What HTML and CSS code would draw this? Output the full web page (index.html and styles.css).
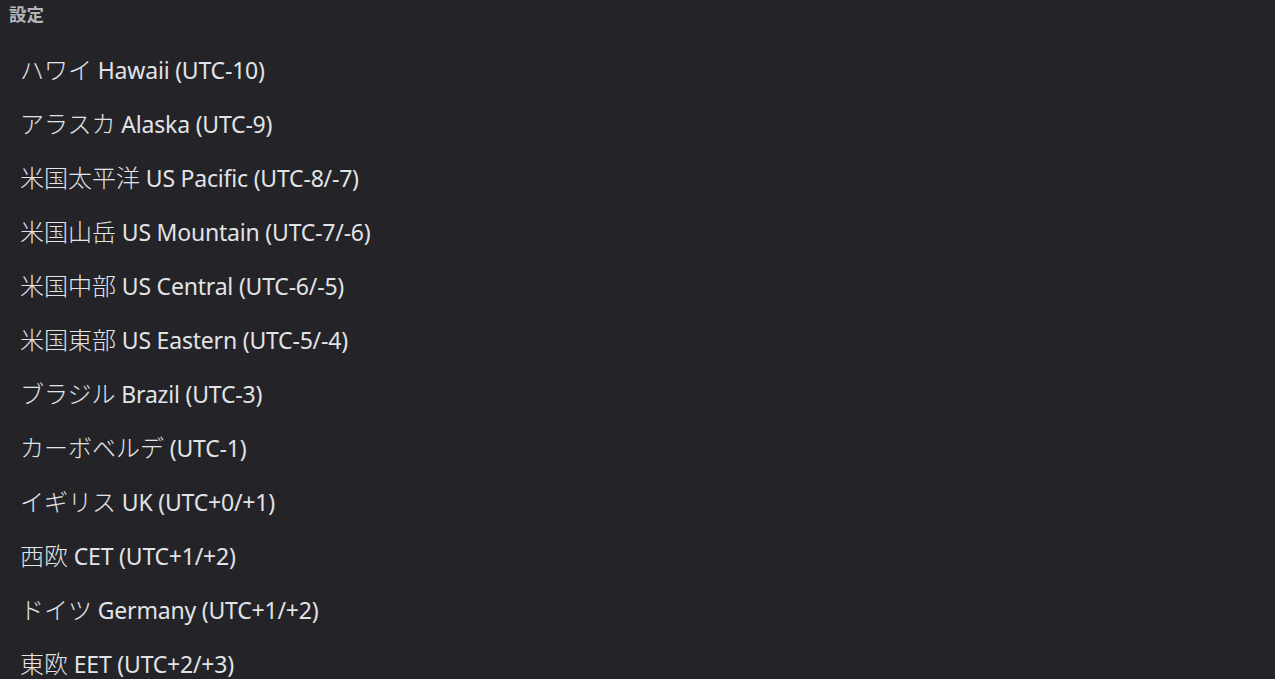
FILE: index.html
```html
<!DOCTYPE html>
<html lang="ja">
<head>
<meta charset="utf-8">
<link rel="stylesheet" href="styles.css">
</head>
<body>
<div class="panel">
  <div class="header">設定</div>
  <ul class="tz-list">
    <li class="tz-item"><span class="ja">ハワイ</span> Hawaii (UTC-10)</li>
    <li class="tz-item"><span class="ja">アラスカ</span> Alaska (UTC-9)</li>
    <li class="tz-item"><span class="ja">米国太平洋</span> US Pacific (UTC-8/-7)</li>
    <li class="tz-item"><span class="ja">米国山岳</span> US Mountain (UTC-7/-6)</li>
    <li class="tz-item"><span class="ja">米国中部</span> US Central (UTC-6/-5)</li>
    <li class="tz-item"><span class="ja">米国東部</span> US Eastern (UTC-5/-4)</li>
    <li class="tz-item"><span class="ja">ブラジル</span> Brazil (UTC-3)</li>
    <li class="tz-item"><span class="ja">カーボベルデ</span> (UTC-1)</li>
    <li class="tz-item"><span class="ja">イギリス</span> UK (UTC+0/+1)</li>
    <li class="tz-item"><span class="ja">西欧</span> CET (UTC+1/+2)</li>
    <li class="tz-item"><span class="ja">ドイツ</span> Germany (UTC+1/+2)</li>
    <li class="tz-item"><span class="ja">東欧</span> EET (UTC+2/+3)</li>
  </ul>
</div>
</body>
</html>
```
FILE: styles.css
```css
html, body {
  margin: 0;
  padding: 0;
  background: #232328;
  height: 100%;
  overflow: hidden;
}
.panel {
  font-family: "Noto Sans", "Noto Sans CJK JP", sans-serif;
  color: #e2e3e6;
}
.header {
  padding: 3px 0 0 9px;
  height: 21px;
  font-size: 17.5px;
  font-weight: 700;
  line-height: 21px;
  color: #b5b6bb;
  font-family: "Noto Sans CJK JP", sans-serif;
}
.tz-list {
  list-style: none;
  margin: 0;
  padding: 18px 0 0 0;
}
.tz-item {
  height: 54px;
  line-height: 54px;
  padding-left: 20px;
  font-size: 23px;
  letter-spacing: -0.2px;
}
.ja {
  font-family: "Noto Sans CJK JP", sans-serif;
  font-size: 24px;
  font-weight: 300;
  letter-spacing: 0;
}
```
